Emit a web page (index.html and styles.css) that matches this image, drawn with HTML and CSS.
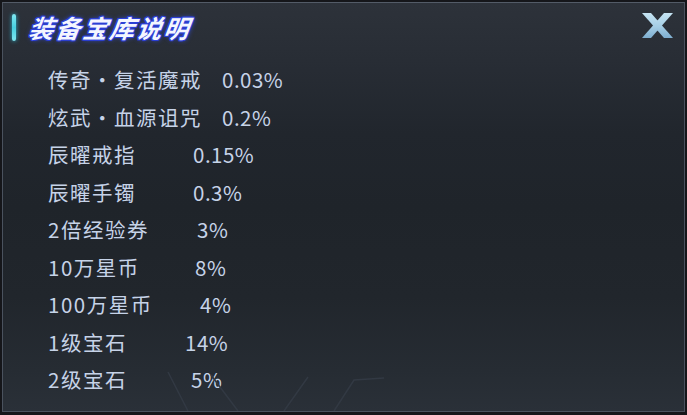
FILE: index.html
```html
<!DOCTYPE html>
<html lang="zh-CN">
<head>
<meta charset="utf-8">
<title>装备宝库说明</title>
<link rel="stylesheet" href="styles.css">
</head>
<body>
<div class="panel">
  <svg class="deco" viewBox="0 0 682 60" preserveAspectRatio="none" aria-hidden="true">
    <path d="M165 21 L185 60 M208 24 L235 60 M305 26 L281 60 M381 27 L351 29 L331 60" />
  </svg>
  <header class="header">
    <span class="bar"></span>
    <h1 class="title">装备宝库说明</h1>
    <button class="close" type="button" aria-label="关闭">
      <svg viewBox="0 0 32 26" width="32" height="26">
        <defs>
          <linearGradient id="xg" x1="0" y1="0" x2="0" y2="1">
            <stop offset="0" stop-color="#c6e4f3"/>
            <stop offset="0.55" stop-color="#a4cde5"/>
            <stop offset="1" stop-color="#7eaed0"/>
          </linearGradient>
        </defs>
        <polygon fill="url(#xg)" points="0,0 9,0 31,25 22,25"/>
        <polygon fill="url(#xg)" points="22,0 31,0 9,25 0,25"/>
      </svg>
    </button>
  </header>
  <ul class="list">
    <li class="row"><span class="name">传奇·复活魔戒</span><span class="val">0.03%</span></li>
    <li class="row"><span class="name">炫武·血源诅咒</span><span class="val">0.2%</span></li>
    <li class="row"><span class="name">辰曜戒指</span><span class="val">0.15%</span></li>
    <li class="row"><span class="name">辰曜手镯</span><span class="val">0.3%</span></li>
    <li class="row"><span class="name">2倍经验券</span><span class="val">3%</span></li>
    <li class="row"><span class="name">10万星币</span><span class="val">8%</span></li>
    <li class="row"><span class="name">100万星币</span><span class="val">4%</span></li>
    <li class="row"><span class="name">1级宝石</span><span class="val">14%</span></li>
    <li class="row"><span class="name">2级宝石</span><span class="val">5%</span></li>
  </ul>
</div>
</body>
</html>
```

FILE: styles.css
```css
* {
  box-sizing: border-box;
}

html,
body {
  margin: 0;
  padding: 0;
}

body {
  width: 687px;
  height: 415px;
  overflow: hidden;
  background: #15161a;
  padding: 2px 2px 3px 2px;
  font-family: "Noto Sans CJK SC", "Noto Sans", sans-serif;
}

.panel {
  position: relative;
  height: 410px;
  border: 1px solid #4a525e;
  border-top-color: #535b67;
  background: linear-gradient(180deg,
    #2d323a 0%,
    #282d35 14%,
    #21262d 32%,
    #1f242a 50%,
    #21262c 72%,
    #262c33 90%,
    #2a3038 100%);
}

/* faint frame lines near the bottom edge */
.deco {
  position: absolute;
  left: 0;
  bottom: 0;
  width: 682px;
  height: 60px;
  pointer-events: none;
}

.deco path {
  fill: none;
  stroke: #323943;
  stroke-width: 1.5;
}

.header {
  display: flex;
  align-items: center;
  height: 48px;
  padding-left: 9px;
  padding-right: 10px;
}

.bar {
  width: 4px;
  height: 27px;
  border-radius: 2px;
  background: linear-gradient(180deg, #7fe8f2, #48cfe0 50%, #7fe8f2);
  box-shadow: 0 0 4px #2bb8d6;
  margin-right: 13px;
}

.title {
  margin: 0;
  font-size: 25px;
  font-weight: 700;
  font-style: italic;
  letter-spacing: 2px;
  color: #f4f6ff;
  line-height: 1;
  transform: skewX(-8deg);
  text-shadow:
    1px 0 0 #2b3fd6,
    -1px 0 0 #2b3fd6,
    0 1px 0 #2b3fd6,
    0 -1px 0 #2b3fd6,
    1px 1px 0 #2b3fd6,
    -1px -1px 0 #2b3fd6,
    1px -1px 0 #2b3fd6,
    -1px 1px 0 #2b3fd6,
    0 0 5px #3552ff;
}

.close {
  margin-left: auto;
  margin-top: -3px;
  padding: 0;
  border: 0;
  background: none;
  display: flex;
}

.list {
  list-style: none;
  margin: 10px 0 0 0;
  padding: 0 0 0 45px;
}

.row {
  display: flex;
  height: 37.5px;
  line-height: 37.5px;
  font-size: 20.5px;
  color: #c6d3e8;
  white-space: nowrap;
}

.name {
  display: inline-block;
  letter-spacing: 1.5px;
}

.val {
  display: inline-block;
  letter-spacing: 0.5px;
}

/* value column positions per row */
.row:nth-child(1) .name { width: 174px; }
.row:nth-child(2) .name { width: 174px; }
.row:nth-child(3) .name { width: 145px; }
.row:nth-child(4) .name { width: 145px; }
.row:nth-child(5) .name { width: 149px; }
.row:nth-child(6) .name { width: 147px; }
.row:nth-child(7) .name { width: 152px; }
.row:nth-child(8) .name { width: 137px; }
.row:nth-child(9) .name { width: 143px; }
```
